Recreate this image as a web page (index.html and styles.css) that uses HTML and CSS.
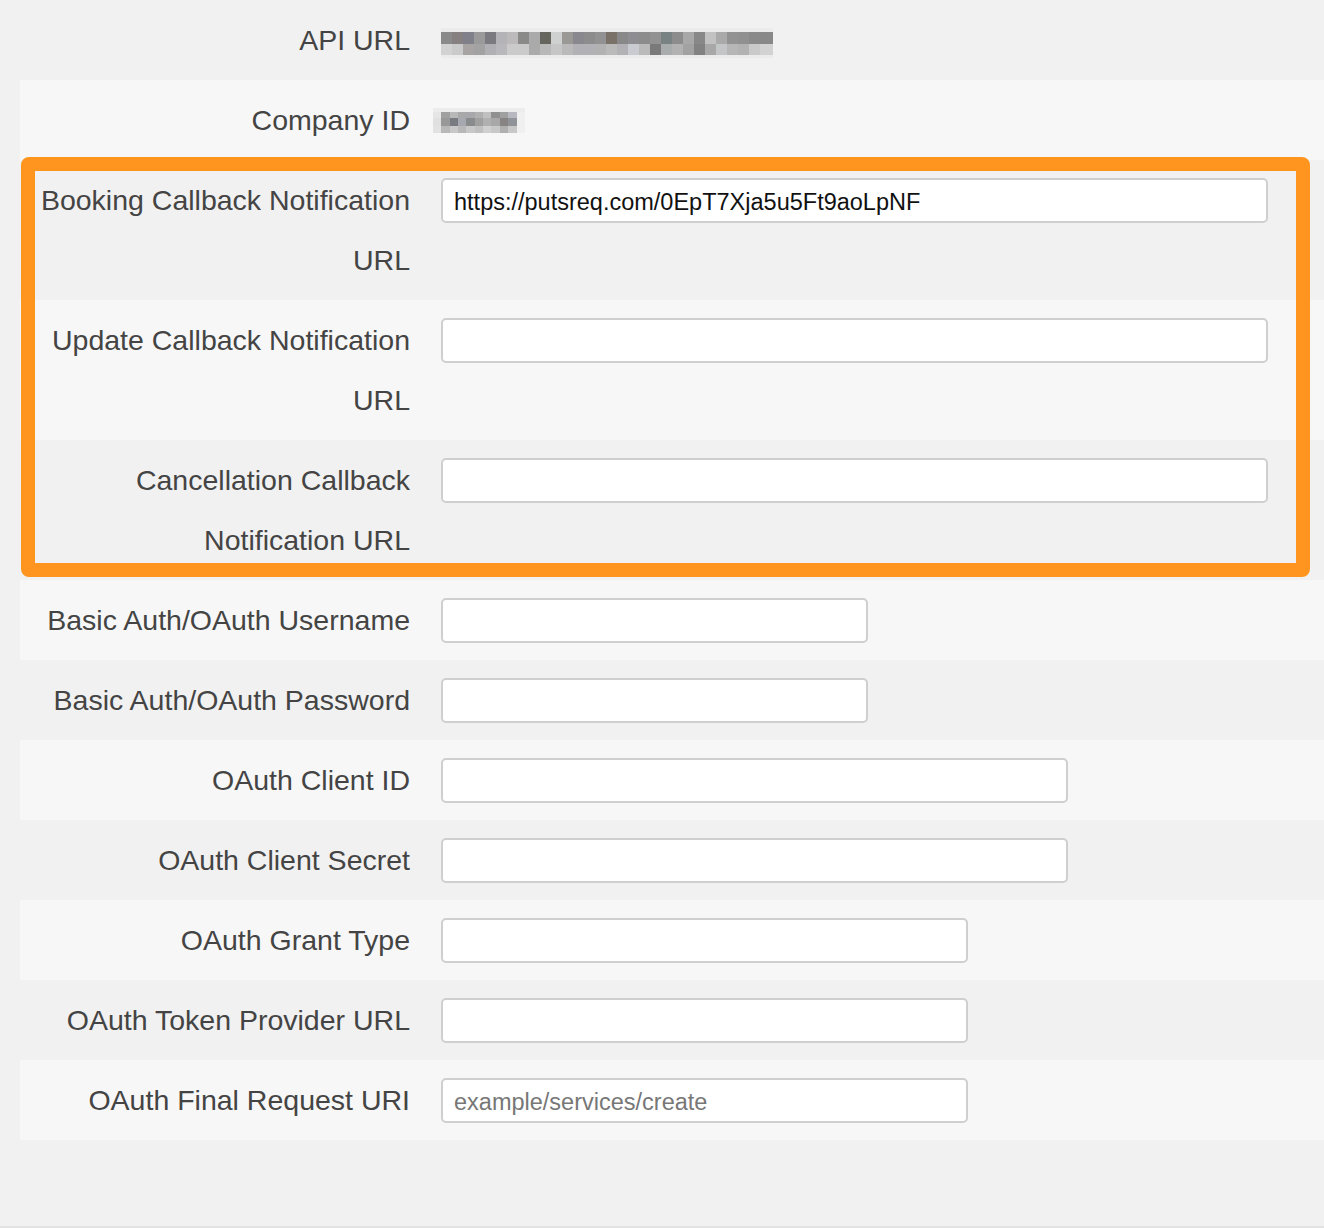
FILE: index.html
```html
<!DOCTYPE html>
<html lang="en">
<head>
<meta charset="utf-8">
<title>Callback settings</title>
<link rel="stylesheet" href="styles.css">
</head>
<body>
<div class="page">
  <div class="form">
    <div class="row row-dark">
      <div class="label">API URL</div>
      <div class="value"><div class="mosaic mosaic-api"></div></div>
    </div>
    <div class="row row-light">
      <div class="label">Company ID</div>
      <div class="value"><div class="mosaic mosaic-company"></div></div>
    </div>
    <div class="row row-dark">
      <label class="label" for="f-booking">Booking Callback Notification URL</label>
      <div class="field"><input id="f-booking" class="input input-xl" type="text" value="https://putsreq.com/0EpT7Xja5u5Ft9aoLpNF"></div>
    </div>
    <div class="row row-light">
      <label class="label" for="f-update">Update Callback Notification URL</label>
      <div class="field"><input id="f-update" class="input input-xl" type="text"></div>
    </div>
    <div class="row row-dark">
      <label class="label" for="f-cancel">Cancellation Callback Notification URL</label>
      <div class="field"><input id="f-cancel" class="input input-xl" type="text"></div>
    </div>
    <div class="row row-light">
      <label class="label" for="f-user">Basic Auth/OAuth Username</label>
      <div class="field"><input id="f-user" class="input input-sm" type="text"></div>
    </div>
    <div class="row row-dark">
      <label class="label" for="f-pass">Basic Auth/OAuth Password</label>
      <div class="field"><input id="f-pass" class="input input-sm" type="text"></div>
    </div>
    <div class="row row-light">
      <label class="label" for="f-cid">OAuth Client ID</label>
      <div class="field"><input id="f-cid" class="input input-md" type="text"></div>
    </div>
    <div class="row row-dark">
      <label class="label" for="f-secret">OAuth Client Secret</label>
      <div class="field"><input id="f-secret" class="input input-md" type="text"></div>
    </div>
    <div class="row row-light">
      <label class="label" for="f-grant">OAuth Grant Type</label>
      <div class="field"><input id="f-grant" class="input input-lg" type="text"></div>
    </div>
    <div class="row row-dark">
      <label class="label" for="f-token">OAuth Token Provider URL</label>
      <div class="field"><input id="f-token" class="input input-lg" type="text"></div>
    </div>
    <div class="row row-light">
      <label class="label" for="f-final">OAuth Final Request URI</label>
      <div class="field"><input id="f-final" class="input input-lg" type="text" placeholder="example/services/create"></div>
    </div>
  </div>
  <div class="highlight"></div>
</div>
</body>
</html>
```

FILE: styles.css
```css
html, body {
  margin: 0;
  padding: 0;
  background: #f1f1f1;
}

.page {
  position: relative;
  box-sizing: border-box;
  min-height: 1228px;
  padding-left: 20px;
  border-bottom: 2px solid #e2e2e2;
  background: #f1f1f1;
}

.form {
  display: flex;
  flex-direction: column;
}

.row {
  display: flex;
  align-items: flex-start;
  gap: 30px;
  padding: 10px 0 10px 10px;
}

.row-dark { background: #f1f1f1; }
.row-light { background: #f7f7f7; }

.label {
  flex: 0 0 380px;
  width: 380px;
  text-align: right;
  font-family: "Liberation Sans", Arial, sans-serif;
  font-size: 28.5px;
  line-height: 60px;
  color: #444444;
}

.field, .value {
  padding-top: 8px;
}

.input {
  box-sizing: border-box;
  display: block;
  height: 45px;
  margin-left: 1px;
  padding: 4px 10px 0 11px;
  border: 2px solid #cfcfcf;
  border-radius: 5px;
  background: #ffffff;
  font-family: "Liberation Sans", Arial, sans-serif;
  font-size: 23.5px;
  color: #111111;
  outline: none;
}

.input::placeholder {
  color: #777777;
}

.input-xl { width: 827px; }
.input-lg { width: 527px; }
.input-md { width: 627px; }
.input-sm { width: 427px; }

.mosaic {
  background-repeat: no-repeat;
}

.mosaic-api {
  margin-top: 10px;
  margin-left: 1px;
  width: 332px;
  height: 30px;
  background-color: #ebebeb;
  background-size: 332px 12px, 332px 11px;
  background-position: 0 4px, 0 16px;
  background-image:
    linear-gradient(to right,
      #8a8a8a 0 11px, #878080 11px 22px, #80808a 22px 33px, #9a9a9a 33px 44px,
      #7a7a80 44px 55px, #b4b4b8 55px 66px, #bcbaba 66px 77px, #8a8a88 77px 88px,
      #aaaaaa 88px 99px, #66665f 99px 110px, #cfd0d0 110px 121px, #9a9995 121px 132px,
      #88888e 132px 143px, #8c8c8c 143px 154px, #929292 154px 165px, #7a7268 165px 176px,
      #888888 176px 187px, #8e8e92 187px 198px, #8c8c8c 198px 209px, #929292 209px 220px,
      #788282 220px 231px, #8c8c8c 231px 242px, #a8a8a8 242px 253px, #888888 253px 264px,
      #c2c2c2 264px 275px, #aaaaaa 275px 286px, #929292 286px 297px, #909090 297px 308px,
      #8a8a8a 308px 319px, #888888 319px 332px),
    linear-gradient(to right,
      #d2d2d2 0 11px, #cacaca 11px 22px, #a8a4a4 22px 33px, #a2a2a2 33px 44px,
      #b0b0b4 44px 55px, #b8b8bc 55px 66px, #cacaca 66px 77px, #cacaca 77px 88px,
      #aaaaaa 88px 99px, #b8b8b8 99px 110px, #c6c6c6 110px 121px, #bababa 121px 132px,
      #b2b2b6 132px 143px, #b2b2b6 143px 154px, #b2b2b2 154px 165px, #bababa 165px 176px,
      #b2b2b6 176px 187px, #c8ccd0 187px 198px, #bababa 198px 209px, #7a7a7a 209px 220px,
      #a8acac 220px 231px, #b2b2b2 231px 242px, #a2a2a2 242px 253px, #828282 253px 264px,
      #a8a8a8 264px 275px, #c2c6c6 275px 286px, #b6b6b6 286px 297px, #b2b2b2 297px 308px,
      #cacaca 308px 319px, #d2d2d2 319px 332px);
}

.mosaic-company {
  margin-top: 10px;
  margin-left: -7px;
  width: 92px;
  height: 25px;
  background-color: #ececec;
  background-size: 92px 6px, 92px 8px, 92px 7px;
  background-position: 0 4px, 0 10px, 0 18px;
  background-image:
    linear-gradient(to right,
      #e6e6e6 0 8px, #a0a0a0 8px 17px, #b8b8b8 17px 25px, #a8a8a8 25px 33px,
      #a8a8ac 33px 42px, #b0b0b0 42px 50px, #c0c0c0 50px 58px, #909090 58px 67px,
      #a0a0a0 67px 75px, #b8b8c0 75px 84px, #f0f0f0 84px 92px),
    linear-gradient(to right,
      #e0e0e0 0 8px, #989898 8px 17px, #787c80 17px 25px, #a8a8b0 25px 33px,
      #888c8c 33px 42px, #a0a0a0 42px 50px, #b0b0b0 50px 58px, #a8a8a8 58px 67px,
      #888484 67px 75px, #909498 75px 84px, #f0f0f0 84px 92px),
    linear-gradient(to right,
      #e2e2e2 0 8px, #b8b8b8 8px 17px, #c8c8c8 17px 25px, #b8b8b8 25px 33px,
      #c8c8c8 33px 42px, #c0c0c0 42px 50px, #d0d0d0 50px 58px, #c8c8c8 58px 67px,
      #b0b0b0 67px 75px, #c8c8c8 75px 84px, #f0f0f0 84px 92px);
}

.highlight {
  position: absolute;
  left: 21px;
  top: 157px;
  width: 1289px;
  height: 420px;
  box-sizing: border-box;
  border: 14px solid #ff951e;
  border-radius: 8px;
  pointer-events: none;
}
```
